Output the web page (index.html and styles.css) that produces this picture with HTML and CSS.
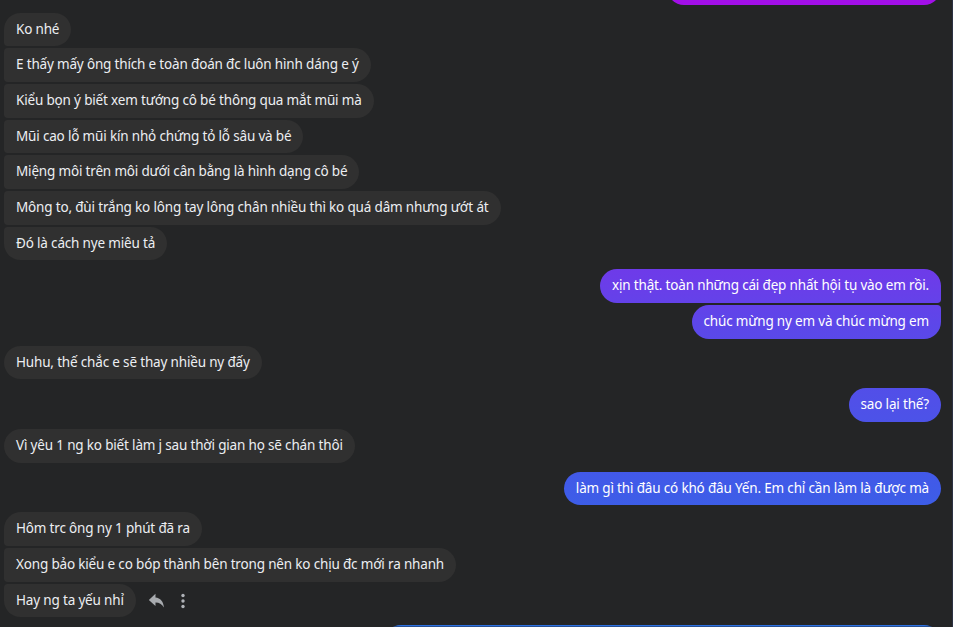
FILE: index.html
```html
<!DOCTYPE html>
<html lang="vi">
<head>
<meta charset="utf-8">
<title>Chat</title>
<link rel="stylesheet" href="styles.css">
</head>
<body>
<div class="thread">
  <div class="row out cut-top"><div class="bubble out-b single top-cut">&nbsp;</div></div>

  <div class="group in-group gap-8">
    <div class="row in"><div class="bubble in-b first">Ko nhé</div></div>
    <div class="row in"><div class="bubble in-b mid">E thấy mấy ông thích e toàn đoán đc luôn hình dáng e ý</div></div>
    <div class="row in"><div class="bubble in-b mid">Kiểu bọn ý biết xem tướng cô bé thông qua mắt mũi mà</div></div>
    <div class="row in"><div class="bubble in-b mid">Mũi cao lỗ mũi kín nhỏ chứng tỏ lỗ sâu và bé</div></div>
    <div class="row in"><div class="bubble in-b mid">Miệng môi trên môi dưới cân bằng là hình dạng cô bé</div></div>
    <div class="row in"><div class="bubble in-b mid">Mông to, đùi trắng ko lông tay lông chân nhiều thì ko quá dâm nhưng ướt át</div></div>
    <div class="row in"><div class="bubble in-b last">Đó là cách nye miêu tả</div></div>
  </div>

  <div class="group out-group gap-9">
    <div class="row out"><div class="bubble out-b first">xịn thật. toàn những cái đẹp nhất hội tụ vào em rồi.</div></div>
    <div class="row out"><div class="bubble out-b last">chúc mừng ny em và chúc mừng em</div></div>
  </div>

  <div class="group in-group gap-7">
    <div class="row in"><div class="bubble in-b single">Huhu, thế chắc e sẽ thay nhiều ny đấy</div></div>
  </div>

  <div class="group out-group gap-9">
    <div class="row out"><div class="bubble out-b single">sao lại thế?</div></div>
  </div>

  <div class="group in-group gap-7">
    <div class="row in"><div class="bubble in-b single">Vì yêu 1 ng ko biết làm j sau thời gian họ sẽ chán thôi</div></div>
  </div>

  <div class="group out-group gap-9">
    <div class="row out"><div class="bubble out-b single">làm gì thì đâu có khó đâu Yến. Em chỉ cần làm là được mà</div></div>
  </div>

  <div class="group in-group gap-7">
    <div class="row in"><div class="bubble in-b first">Hôm trc ông ny 1 phút đã ra</div></div>
    <div class="row in"><div class="bubble in-b mid">Xong bảo kiểu e co bóp thành bên trong nên ko chịu đc mới ra nhanh</div></div>
    <div class="row in">
      <div class="bubble in-b last">Hay ng ta yếu nhỉ</div>
      <div class="actions">
        <span class="act reply" aria-label="Trả lời">
          <svg width="17" height="17" viewBox="0 0 20 20"><path d="M8.8 2.2 L1 9.4 L8.8 16.4 L8.8 12.4 C13.2 12.3 16 14.2 18.8 18.2 C18.2 11.2 14.6 6.9 8.8 6.4 Z" fill="#a8abaf"/></svg>
        </span>
        <span class="act more" aria-label="Thêm">
          <svg width="6" height="16" viewBox="0 0 6 16"><circle cx="3" cy="2.5" r="1.7" fill="#b0b3b8"/><circle cx="3" cy="8" r="1.7" fill="#b0b3b8"/><circle cx="3" cy="13.5" r="1.7" fill="#b0b3b8"/></svg>
        </span>
      </div>
    </div>
  </div>

  <div class="group out-group gap-8">
    <div class="row out"><div class="bubble out-b wide single">&nbsp;</div></div>
  </div>
</div>
</body>
</html>
```

FILE: styles.css
```css
html, body {
  margin: 0;
  padding: 0;
  height: 100%;
  overflow: hidden;
  background: #242526;
}
body {
  font-family: "Noto Sans", "Open Sans", "DejaVu Sans", sans-serif;
  font-size: 13.5px;
  letter-spacing: -0.17px;
  color: #eceef2;
  border-right: 1px solid #2b3142;
  box-sizing: border-box;
}
.thread {
  display: flex;
  flex-direction: column;
  padding: 0 11px 0 4px;
}
.group {
  display: flex;
  flex-direction: column;
  gap: 2px;
}
.gap-7 { margin-top: 7px; }
.gap-8 { margin-top: 8px; }
.gap-9 { margin-top: 9px; }
.row {
  display: flex;
  align-items: center;
}
.row.in { justify-content: flex-start; }
.row.out { justify-content: flex-end; }
.bubble {
  padding: 8px 12px;
  line-height: 17.67px;
  white-space: nowrap;
  border-radius: 18px;
}
.in-b { background: #303030; }
.out-b {
  background: linear-gradient(to bottom, #a30fe8 0%, #8a24e8 22%, #6b3de9 45%, #5c47e9 52%, #5050e8 64%, #3f5be8 78%, #2c70e1 100%);
  background-attachment: fixed;
  color: #ffffff;
}
.in-b.first { border-bottom-left-radius: 4px; }
.in-b.mid { border-top-left-radius: 4px; border-bottom-left-radius: 4px; }
.in-b.last { border-top-left-radius: 4px; }
.out-b.first { border-bottom-right-radius: 4px; }
.out-b.last { border-top-right-radius: 4px; }
.top-cut {
  width: 250px;
  margin-top: -29px;
}
.wide { width: 533px; }
.actions {
  display: flex;
  align-items: center;
  margin-left: 12px;
  gap: 15px;
}
.act {
  display: flex;
  align-items: center;
  justify-content: center;
}
.act svg { display: block; }
```
